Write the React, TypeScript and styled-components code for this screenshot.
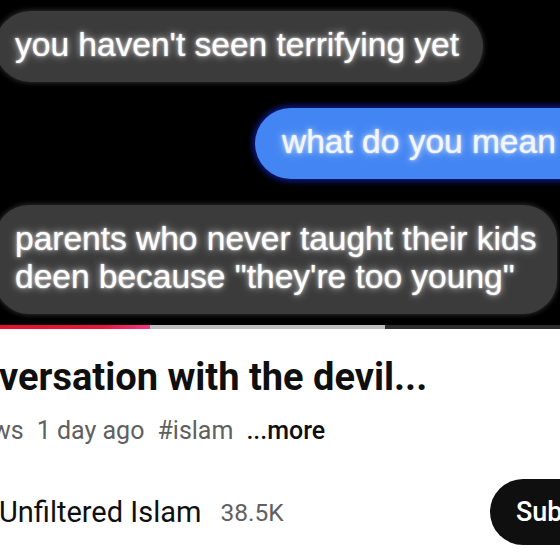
import styled, { createGlobalStyle } from "styled-components";

const GlobalStyle = createGlobalStyle`
  html, body {
    margin: 0;
    padding: 0;
    background: #ffffff;
  }
`;

const Screen = styled.div`
  width: 560px;
  height: 560px;
  overflow: hidden;
  background: #ffffff;
  font-family: Roboto, "Liberation Sans", sans-serif;
`;

const Video = styled.div`
  height: 325px;
  box-sizing: border-box;
  padding-top: 11px;
  background: #000000;
  display: flex;
  flex-direction: column;
  gap: 26px;
  overflow: hidden;
`;

const Bubble = styled.div<{ $blue?: boolean }>`
  box-sizing: border-box;
  padding: 15px 24px 18px 20px;
  border-radius: 36px;
  font-family: "Liberation Sans", Arial, sans-serif;
  font-size: 33.5px;
  line-height: 38px;
  white-space: nowrap;
  background: ${(p) => (p.$blue ? "#4386f3" : "#3b3b3b")};
  color: ${(p) => (p.$blue ? "#f1f6ff" : "#ffffff")};
  box-shadow: ${(p) =>
    p.$blue
      ? "0 0 6px 2px rgba(20, 40, 200, 0.75)"
      : "0 0 5px 1px rgba(90, 90, 90, 0.5)"};
  text-shadow: 0 0 2px rgba(255, 255, 255, 0.9), 0 0 6px rgba(255, 255, 255, 0.6),
    0 0 11px rgba(255, 255, 255, 0.35);
`;

const LeftBubble = styled(Bubble)`
  align-self: flex-start;
  margin-left: -5px;
`;

const WideBubble = styled(Bubble)`
  margin-left: -5px;
  margin-right: 3px;
  border-radius: 34px;
`;

const RightBubble = styled(Bubble)`
  margin-left: 255px;
  margin-right: -40px;
  padding-left: 27px;
`;

const Progress = styled.div`
  display: flex;
  height: 4px;
`;

const Segment = styled.div<{ $w?: number; $tone: "played" | "buffered" | "rest" }>`
  flex: ${(p) => (p.$w ? `0 0 ${p.$w}px` : "1")};
  background: ${(p) =>
    p.$tone === "played"
      ? "linear-gradient(90deg, #e3122d 0%, #e8173c 70%, #f4358a 100%)"
      : p.$tone === "buffered"
      ? "#bdbdbd"
      : "#2e2e2e"};
`;

const Details = styled.div`
  padding-top: 25px;
  display: flex;
  flex-direction: column;
`;

const Title = styled.h1`
  margin: 0 0 0 -1px;
  font-size: 38px;
  line-height: 46px;
  font-weight: 700;
  color: #0f0f0f;
  white-space: nowrap;
`;

const Meta = styled.div`
  margin-top: 15px;
  margin-left: -8px;
  display: flex;
  gap: 13px;
  font-size: 25px;
  line-height: 31px;
  color: #606060;
  white-space: nowrap;
`;

const More = styled.span`
  color: #0f0f0f;
  font-weight: 500;
`;

const ChannelRow = styled.div`
  margin-top: 33px;
  display: flex;
  align-items: center;
  gap: 19px;
  white-space: nowrap;
`;

const ChannelName = styled.span`
  font-size: 29px;
  font-weight: 400;
  color: #0f0f0f;
  margin-left: -1px;
`;

const Subs = styled.span`
  font-size: 24.5px;
  color: #606060;
`;

const SubscribeButton = styled.button`
  margin-left: auto;
  margin-right: -70px;
  height: 66px;
  padding: 0 26px;
  border: none;
  border-radius: 33px;
  background: #0f0f0f;
  color: #ffffff;
  font-family: Roboto, "Liberation Sans", sans-serif;
  font-size: 27px;
  font-weight: 500;
  text-align: left;
  width: 140px;
`;

export default function App() {
  return (
    <>
      <GlobalStyle />
      <Screen>
        <Video>
          <LeftBubble>you haven't seen terrifying yet</LeftBubble>
          <RightBubble $blue>what do you mean</RightBubble>
          <WideBubble>
            parents who never taught their kids
            <br />
            deen because "they're too young"
          </WideBubble>
        </Video>
        <Progress>
          <Segment $w={150} $tone="played" />
          <Segment $w={235} $tone="buffered" />
          <Segment $tone="rest" />
        </Progress>
        <Details>
          <Title>versation with the devil...</Title>
          <Meta>
            <span>ws</span>
            <span>1 day ago</span>
            <span>#islam</span>
            <More>...more</More>
          </Meta>
          <ChannelRow>
            <ChannelName>Unfiltered Islam</ChannelName>
            <Subs>38.5K</Subs>
            <SubscribeButton>Subscribe</SubscribeButton>
          </ChannelRow>
        </Details>
      </Screen>
    </>
  );
}
